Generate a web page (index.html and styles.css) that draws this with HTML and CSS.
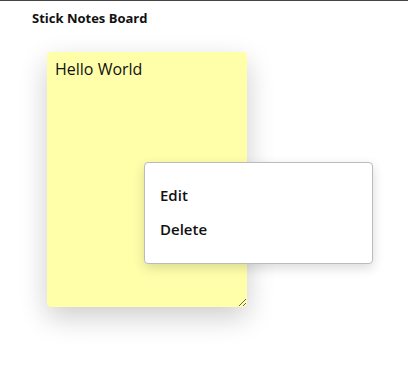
FILE: index.html
```html
<!DOCTYPE html>
<html lang="en">
<head>
    <meta charset="UTF-8">
    <meta name="viewport" content="width=device-width, initial-scale=1.0">
    <title>Stick Notes Board</title>
    <link rel="stylesheet" href="styles.css">
</head>
<body>
    <header class="top-bar">
        <h1 class="title">Stick Notes Board</h1>
    </header>

    <div class="board">
        <textarea class="note">Hello World</textarea>
    </div>

    <!-- Context menu for a note -->
    <ul class="context-menu">
        <li>Edit</li>
        <li>Delete</li>
    </ul>
</body>
</html>
```

FILE: styles.css
```css
html {
    height: 100%;
}
body {
    font-family: "Open Sans", "DejaVu Sans", sans-serif;
    margin: 0;
    padding: 0;
    min-height: 100%;
    box-sizing: border-box;
    background-color: #fff;
    border-top: 1px solid #444;
    color: #111;
}
.top-bar {
    padding: 8px 32px 0;
}
.title {
    font-size: 13px;
    font-weight: bold;
    margin: 0;
    line-height: 18px;
}
.board {
    padding: 25px 47px 60px;
}
.note {
    display: block;
    width: 200px;
    height: 255px;
    box-sizing: border-box;
    padding: 6px 8px;
    border: none;
    border-radius: 4px;
    background-color: #ffffaa;
    font-family: "Open Sans", sans-serif;
    font-size: 16px;
    color: #111;
    box-shadow: 0 10px 28px rgba(0, 0, 0, 0.2);
    outline: none;
}
.context-menu {
    position: absolute;
    top: 162px;
    left: 144px;
    width: 229px;
    height: 102px;
    box-sizing: border-box;
    margin: 0;
    padding: 15px 0 0 15px;
    list-style: none;
    background-color: #fff;
    border: 1px solid #bbb;
    border-radius: 4px;
    box-shadow: 0 4px 12px rgba(0, 0, 0, 0.15);
}
.context-menu li {
    font-size: 15px;
    font-weight: 600;
    line-height: 34px;
    cursor: pointer;
}
```
